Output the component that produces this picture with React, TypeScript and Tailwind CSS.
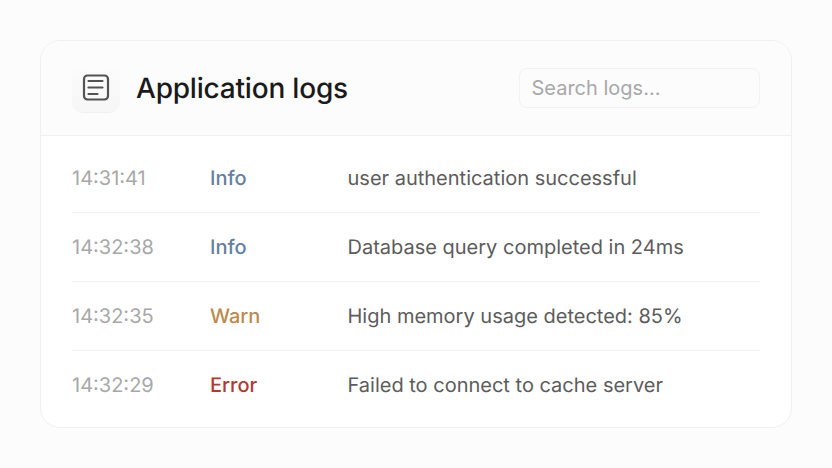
import React from 'react';

const logs = [
    { time: '14:31:41', level: 'Info', color: 'text-[#64809f]', message: 'user authentication successful' },
    { time: '14:32:38', level: 'Info', color: 'text-[#64809f]', message: 'Database query completed in 24ms' },
    { time: '14:32:35', level: 'Warn', color: 'text-[#bd8a4b]', message: 'High memory usage detected: 85%' },
    { time: '14:32:29', level: 'Error', color: 'text-[#b03a32]', message: 'Failed to connect to cache server' },
];

const LogIcon: React.FC = () => (
    <svg width="30" height="30" viewBox="0 0 30 30" fill="none" stroke="#525252" strokeWidth="2.2" strokeLinecap="round">
        <rect x="3" y="2.5" width="24" height="24" rx="3.5" />
        <path d="M7.5 8h14M7.5 14.5h14M7.5 21h9" />
    </svg>
);

const App: React.FC = () => (
    <div className="w-[832px] h-[468px] bg-[#fcfcfc] p-10 font-['Inter',sans-serif] [text-rendering:geometricPrecision]">
        <div className="h-[388px] bg-white border border-[#f0f0f0] rounded-[20px] overflow-hidden">
            <div className="h-[95px] flex items-center justify-between px-[31px] bg-[#fcfcfc] border-b border-[#f0f0f0]">
                <div className="flex items-center gap-4">
                    <div className="w-12 h-12 rounded-xl bg-gradient-to-b from-[#fcfcfc] to-[#f6f6f6] shadow-[0_1px_1px_rgba(0,0,0,0.05)] flex items-center justify-center">
                        <LogIcon />
                    </div>
                    <h1 className="text-[28px] leading-none font-medium tracking-[-0.2px] text-[#1a1a1a]">Application logs</h1>
                </div>
                <input
                    placeholder="Search logs..."
                    className="w-[241px] h-10 pl-[11.5px] pr-3 rounded-lg border border-[#f2f2f2] bg-[#fcfcfc] text-xl outline-none placeholder:text-[#a8a8a8]"
                />
            </div>
            <div className="px-[31px] pt-2">
                {logs.map((log, i) => (
                    <div key={i} className="h-[69px] flex items-center text-xl border-b border-[#f0f0f0] last:border-transparent">
                        <span className="w-[138px] text-[#a8a8a8]">{log.time}</span>
                        <span className={`w-[137.5px] font-medium ${log.color}`}>{log.level}</span>
                        <span className="text-[#5c5c5c]">{log.message}</span>
                    </div>
                ))}
            </div>
        </div>
    </div>
);

export default App;
